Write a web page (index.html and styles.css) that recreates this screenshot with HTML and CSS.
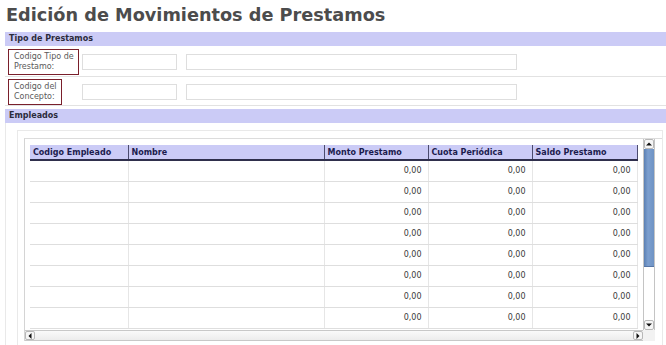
FILE: index.html
```html
<!DOCTYPE html>
<html lang="es">
<head>
    <meta charset="UTF-8">
    <meta name="viewport" content="width=device-width, initial-scale=1.0">
    <title>Edición de Movimientos de Prestamos</title>
    <link rel="stylesheet" href="styles.css">
</head>
<body>
    <div class="page">
        <h1 class="title">Edición de Movimientos de Prestamos</h1>

        <section class="panel">
            <div class="band">Tipo de Prestamos</div>
            <div class="form-row">
                <div class="label-cell">
                    <label class="label-box" for="tipoCodigo">Codigo Tipo de<br>Prestamo:</label>
                </div>
                <input type="text" id="tipoCodigo" class="field field-code">
                <input type="text" class="field field-desc">
            </div>
            <div class="form-row">
                <div class="label-cell">
                    <label class="label-box" for="conceptoCodigo">Codigo del<br>Concepto:</label>
                </div>
                <input type="text" id="conceptoCodigo" class="field field-code">
                <input type="text" class="field field-desc">
            </div>
        </section>

        <section class="panel panel-grid">
            <div class="band">Empleados</div>
            <div class="frame-outer">
                <div class="frame-inner">
                    <div class="grid-wrap">
                        <div class="grid-view">
                            <table class="grid">
                                <colgroup>
                                    <col class="col-code">
                                    <col class="col-name">
                                    <col class="col-num">
                                    <col class="col-num">
                                    <col class="col-num-last">
                                </colgroup>
                                <thead>
                                    <tr>
                                        <th>Codigo Empleado</th>
                                        <th>Nombre</th>
                                        <th>Monto Prestamo</th>
                                        <th>Cuota Periódica</th>
                                        <th>Saldo Prestamo</th>
                                    </tr>
                                </thead>
                                <tbody id="gridBody"></tbody>
                            </table>
                        </div>
                        <div class="vscroll">
                            <div class="sb-btn sb-up"></div>
                            <div class="vscroll-track">
                                <div class="vscroll-thumb"><span class="grip"></span></div>
                            </div>
                            <div class="sb-btn sb-down"></div>
                        </div>
                        <div class="hscroll">
                            <div class="sb-btn sb-left"></div>
                            <div class="hscroll-track"></div>
                            <div class="sb-btn sb-right"></div>
                        </div>
                        <div class="sb-corner"></div>
                    </div>
                </div>
            </div>
        </section>
    </div>

    <script>
        // rellenar filas vacías del detalle
        var body = document.getElementById('gridBody');
        for (var i = 0; i < 8; i++) {
            var tr = document.createElement('tr');
            tr.innerHTML = '<td></td><td></td>' +
                '<td class="num">0,00</td><td class="num">0,00</td><td class="num">0,00</td>';
            body.appendChild(tr);
        }
    </script>
</body>
</html>
```

FILE: styles.css
```css
* {
    margin: 0;
    padding: 0;
    box-sizing: border-box;
}

body {
    background-color: #fff;
    font-family: "DejaVu Sans", Verdana, sans-serif;
    overflow: hidden;
}

.page {
    padding-left: 5px;
}

.title {
    font-size: 17.7px;
    font-weight: bold;
    line-height: 31px;
    color: #4c4c4c;
    margin-bottom: 1px;
    padding-left: 1px;
    white-space: nowrap;
}

.band {
    height: 14px;
    line-height: 14px;
    padding-left: 4px;
    background-color: #cbcbf6;
    color: #2c2c3c;
    font-size: 8px;
    font-weight: bold;
}

/* formulario de cabecera */

.form-row {
    display: flex;
    align-items: center;
    height: 31px;
    padding-top: 2px;
    border-bottom: 1px solid #e2e2e2;
}

.form-row + .form-row {
    height: 29px;
    padding-top: 1px;
}

.label-cell {
    width: 77px;
    padding-left: 3px;
    flex-shrink: 0;
}

.label-box {
    display: inline-block;
    border: 1px solid #7a1f2b;
    padding: 2px 4px 2px 5px;
    font-size: 8px;
    line-height: 10px;
    color: #5a5a5a;
}

.field {
    height: 16px;
    border: 1px solid #dedede;
    background-color: #fff;
    outline: none;
}

.field-code {
    width: 95px;
}

.field-desc {
    width: 331px;
    margin-left: 9px;
}

/* detalle de empleados */

.panel-grid {
    margin-top: 3px;
}

.frame-outer {
    border-left: 1px solid #e9e9e9;
    padding: 7px 3px 0 11px;
    height: 230px;
}

.frame-outer > .frame-inner {
    border-top: 1px solid #e9e9e9;
    border-left: 1px solid #e9e9e9;
    border-right: 1px solid #e9e9e9;
    padding: 7px 0 0 6px;
    height: 100%;
}

.grid-wrap {
    display: grid;
    grid-template-columns: 618px 12px;
    grid-template-rows: 191px 11px;
    border-top: 1px solid #dcdcdc;
    border-left: 1px solid #d4d4d4;
}

.grid-view {
    overflow: hidden;
    padding: 6px 0 0 5px;
}

.grid {
    border-collapse: collapse;
    table-layout: fixed;
    width: 607px;
    font-size: 8px;
}

.col-code { width: 98px; }
.col-name { width: 196px; }
.col-num { width: 104px; }
.col-num-last { width: 105px; }

.grid th {
    height: 15px;
    background-color: #cbcbf6;
    color: #1c1c4e;
    font-weight: bold;
    text-align: left;
    padding: 0 3px;
    border-right: 1px solid #4b4b6e;
    border-bottom: 2px solid #2f2f4c;
    white-space: nowrap;
}

.grid td {
    height: 21px;
    border-right: 1px solid #e6e6e6;
    border-bottom: 1px solid #dedede;
    color: #3a3a3a;
    padding: 0 6px;
}

.grid td.num {
    text-align: right;
}

/* barras de desplazamiento */

.vscroll {
    display: flex;
    flex-direction: column;
    border-left: 1px solid #c4c4c4;
    border-right: 1px solid #c4c4c4;
}

.sb-btn {
    position: relative;
    width: 10px;
    height: 10px;
    flex-shrink: 0;
    background-color: #f6f6f6;
    border: 1px solid #b8b8b8;
    border-radius: 2px;
}

.vscroll .sb-btn {
    width: 100%;
}

.sb-btn::after {
    content: "";
    position: absolute;
    left: 50%;
    top: 50%;
    width: 0;
    height: 0;
    border: 3px solid transparent;
}

.sb-up::after {
    border-bottom-color: #111;
    transform: translate(-50%, -75%);
}

.sb-down::after {
    border-top-color: #111;
    transform: translate(-50%, -25%);
}

.sb-left::after {
    border-right-color: #111;
    transform: translate(-75%, -50%);
}

.sb-right::after {
    border-left-color: #111;
    transform: translate(-25%, -50%);
}

.vscroll-track {
    flex: 1;
    background-color: #fff;
}

.vscroll-thumb {
    position: relative;
    height: 118px;
    background: linear-gradient(to right, #5b80b3, #7c9fcf 40%, #6f93c4);
    border-bottom: 1px solid #5676a6;
}

.grip {
    position: absolute;
    left: 3px;
    top: 52px;
    width: 4px;
    height: 10px;
    background-image: radial-gradient(#c9d8ee 45%, transparent 50%);
    background-size: 2px 2px;
}

.hscroll {
    display: flex;
    align-items: center;
    background-color: #f1f1f1;
    border-top: 1px solid #c8c8c8;
    border-bottom: 1px solid #c8c8c8;
}

.hscroll .sb-btn {
    height: 100%;
}

.hscroll-track {
    flex: 1;
    height: 100%;
    background: linear-gradient(#fafafa, #ececec);
}

.sb-corner {
    background-color: #f2f2f2;
}
```
